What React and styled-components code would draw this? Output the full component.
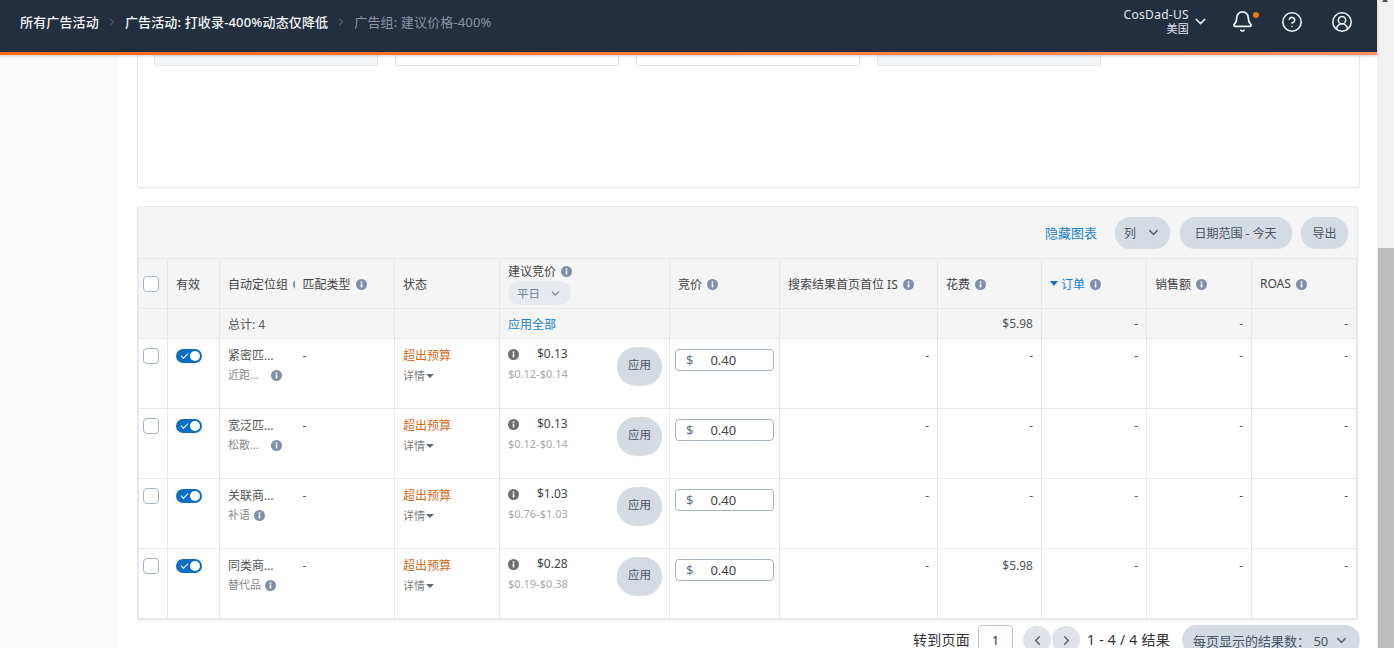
import React from "react";
import styled, { createGlobalStyle } from "styled-components";
import { Bell, ChevronDown, ChevronLeft, ChevronRight, CircleHelp, CircleUserRound } from "lucide-react";

const GlobalStyle = createGlobalStyle`
  html, body { margin: 0; height: 100%; overflow: hidden; background: #fff; }
  body {
    font-family: "Noto Sans", "Noto Sans CJK SC", "Liberation Sans", sans-serif;
    font-size: 12px;
    color: #444;
  }
  * { box-sizing: border-box; }
`;

const rows = [
  { name: "紧密匹…", sub: "近距…", gap: 12, bid: "$0.13", range: "$0.12-$0.14" },
  { name: "宽泛匹…", sub: "松散…", gap: 12, bid: "$0.13", range: "$0.12-$0.14" },
  { name: "关联商…", sub: "补语", gap: 4, bid: "$1.03", range: "$0.76-$1.03" },
  { name: "同类商…", sub: "替代品", gap: 4, bid: "$0.28", range: "$0.19-$0.38", spend: "$5.98" },
];

const colWidths = [29, 52, 75, 100, 105, 170, 110, 158, 104, 105, 105, 105];

const Info = ({ color = "#7f8fa9", size = 11 }) => (
  <InfoSvg viewBox="0 0 12 12" width={size} height={size}>
    <circle cx="6" cy="6" r="6" fill={color} />
    <rect x="5.1" y="5" width="1.8" height="4.2" fill="#fff" />
    <rect x="5.1" y="2.6" width="1.8" height="1.6" fill="#fff" />
  </InfoSvg>
);

const App = () => (
  <Shell>
    <GlobalStyle />
    <Main>
      <TopBar>
        <Crumbs>
          <Crumb>所有广告活动</Crumb>
          <ChevronRight size={12} color="#6f7b8b" />
          <Crumb>广告活动: 打收录-400%动态仅降低</Crumb>
          <ChevronRight size={12} color="#6f7b8b" />
          <Crumb $muted>广告组: 建议价格-400%</Crumb>
        </Crumbs>
        <Account>
          <AccountName>
            <span>CosDad-US</span>
            <small>美国</small>
          </AccountName>
          <ChevronDown size={17} color="#e6e8eb" />
        </Account>
        <BellWrap>
          <Bell size={23} color="#f2f3f5" strokeWidth={1.8} />
          <Dot />
        </BellWrap>
        <CircleHelp size={22} color="#f2f3f5" strokeWidth={1.7} />
        <CircleUserRound size={22} color="#f2f3f5" strokeWidth={1.7} />
      </TopBar>

      <Body>
        <Gutter />
        <Content>
          <ChartCard>
            <Tiles>
              <Tile $tinted />
              <Tile />
              <Tile />
              <Tile $tinted />
            </Tiles>
          </ChartCard>

          <TableCard>
            <Toolbar>
              <ToolbarLink>隐藏图表</ToolbarLink>
              <PillGroup>
                <Pill $w={55}>列 <ChevronDown size={15} strokeWidth={2.4} color="#5b6677" /></Pill>
                <Pill $w={112}>日期范围 - 今天</Pill>
                <Pill $w={47}>导出</Pill>
              </PillGroup>
            </Toolbar>

            <Table>
              <colgroup>
                {colWidths.map((w, i) => <col key={i} style={{ width: w }} />)}
              </colgroup>
              <thead>
                <tr>
                  <HeadCell><Check /></HeadCell>
                  <HeadCell>有效</HeadCell>
                  <HeadCell $noRight $clip><Label>自动定位组<Info /></Label></HeadCell>
                  <HeadCell $noLeft><Label>匹配类型<Info /></Label></HeadCell>
                  <HeadCell>状态</HeadCell>
                  <HeadCell>
                    <Label>建议竞价<Info /></Label>
                    <DayPill>平日 <ChevronDown size={13} strokeWidth={2.2} color="#76849a" /></DayPill>
                  </HeadCell>
                  <HeadCell><Label>竞价<Info /></Label></HeadCell>
                  <HeadCell><Label>搜索结果首页首位 IS<Info /></Label></HeadCell>
                  <HeadCell><Label>花费<Info /></Label></HeadCell>
                  <HeadCell><Label><SortArrow /><SortText>订单</SortText><Info /></Label></HeadCell>
                  <HeadCell><Label>销售额<Info /></Label></HeadCell>
                  <HeadCell><Label>ROAS<Info /></Label></HeadCell>
                </tr>
                <tr>
                  <TotalCell />
                  <TotalCell />
                  <TotalCell $noRight>总计: 4</TotalCell>
                  <TotalCell $noLeft />
                  <TotalCell />
                  <TotalCell><LinkText>应用全部</LinkText></TotalCell>
                  <TotalCell />
                  <TotalCell />
                  <TotalCell $right>$5.98</TotalCell>
                  <TotalCell $right>-</TotalCell>
                  <TotalCell $right>-</TotalCell>
                  <TotalCell $right>-</TotalCell>
                </tr>
              </thead>
              <tbody>
                {rows.map((row) => (
                  <tr key={row.name}>
                    <Cell><Check /></Cell>
                    <Cell><Toggle /></Cell>
                    <Cell $noRight>
                      <div>{row.name}</div>
                      <SubLine>{row.sub}<SubInfo $gap={row.gap}><Info /></SubInfo></SubLine>
                    </Cell>
                    <Cell $noLeft>-</Cell>
                    <Cell>
                      <Over>超出预算</Over>
                      <Details>详情<Caret /></Details>
                    </Cell>
                    <Cell>
                      <BidWrap>
                        <div>
                          <BidLine><Info color="#6f6f6f" /><b>{row.bid}</b></BidLine>
                          <Range>{row.range}</Range>
                        </div>
                        <ApplyBtn>应用</ApplyBtn>
                      </BidWrap>
                    </Cell>
                    <Cell $tight>
                      <BidInput><span>$</span><em>0.40</em></BidInput>
                    </Cell>
                    <Cell $right>-</Cell>
                    <Cell $right>{row.spend || "-"}</Cell>
                    <Cell $right>-</Cell>
                    <Cell $right>-</Cell>
                    <Cell $right>-</Cell>
                  </tr>
                ))}
              </tbody>
            </Table>
          </TableCard>

          <Pager>
            <PagerText>转到页面</PagerText>
            <PageInput>1</PageInput>
            <Arrows>
              <ArrowBtn><ChevronLeft size={15} strokeWidth={2.6} color="#5b6677" /></ArrowBtn>
              <ArrowBtn><ChevronRight size={15} strokeWidth={2.6} color="#5b6677" /></ArrowBtn>
            </Arrows>
            <PagerText>1 - 4 / 4 结果</PagerText>
            <PerPage>每页显示的结果数： 50 <ChevronDown size={15} strokeWidth={2.4} color="#5b6677" /></PerPage>
          </Pager>
        </Content>
      </Body>
    </Main>
    <ScrollTrack>
      <ScrollArrow />
      <ScrollThumb />
    </ScrollTrack>
  </Shell>
);

export default App;

const Shell = styled.div`
  display: flex;
  width: 1394px;
  height: 648px;
  overflow: hidden;
`;

const Main = styled.div`
  flex: none;
  width: 1377px;
  display: flex;
  flex-direction: column;
`;

const TopBar = styled.header`
  position: relative;
  z-index: 2;
  flex: none;
  height: 55px;
  display: flex;
  align-items: center;
  padding: 0 24px 9px 20px;
  background: #232f3f;
  border-bottom: 3px solid;
  border-image: linear-gradient(90deg, #ff6a13, #ff8f68) 1;
  box-shadow: 0 1px 3px rgba(0, 0, 0, 0.2);

  & > svg {
    margin-left: 28px;
  }
`;

const Crumbs = styled.nav`
  flex: 1;
  display: flex;
  align-items: center;
  gap: 7px;
`;

const Crumb = styled.span`
  font-size: 13px;
  letter-spacing: 0.15px;
  font-weight: ${(p) => (p.$muted ? 400 : 500)};
  color: ${(p) => (p.$muted ? "#8994a3" : "#f4f5f6")};
`;

const Account = styled.div`
  display: flex;
  align-items: center;
  gap: 3px;
  color: #e3e6ea;
`;

const AccountName = styled.div`
  display: flex;
  flex-direction: column;
  align-items: flex-end;
  font-size: 12px;
  line-height: 15px;
  letter-spacing: 0.3px;

  small {
    font-size: 11px;
    line-height: 14px;
  }
`;

const BellWrap = styled.div`
  position: relative;
  display: flex;
  margin-left: 22px;
  margin-right: -1px;
`;

const Dot = styled.i`
  position: absolute;
  top: 2px;
  right: -5px;
  width: 6px;
  height: 6px;
  border-radius: 50%;
  background: #e8780f;
`;

const Body = styled.div`
  flex: 1;
  display: flex;
  min-height: 0;
`;

const Gutter = styled.aside`
  flex: none;
  width: 118px;
  background: #fafafa;
`;

const Content = styled.main`
  flex: 1;
  min-width: 0;
  padding: 0 17px 0 19px;
`;

const ChartCard = styled.section`
  height: 133px;
  background: #fff;
  border: 1px solid #e9eaec;
  border-top: 0;
  border-radius: 0 0 3px 3px;
  padding-left: 16px;
  box-shadow: 0 1px 2px rgba(0, 0, 0, 0.04);
`;

const Tiles = styled.div`
  display: flex;
  gap: 17px;
`;

const Tile = styled.div`
  width: 224px;
  height: 11px;
  background: ${(p) => (p.$tinted ? "#f4f5f7" : "#fff")};
  border: 1px solid #e3e5e8;
  border-top: 0;
`;

const TableCard = styled.section`
  margin: 18px 2px 0 0;
  padding-right: 1px;
  background: #f5f5f5;
  border: 1px solid #e6e7e9;
  border-radius: 3px;
  box-shadow: 0 1px 2px rgba(0, 0, 0, 0.05);
`;

const Toolbar = styled.div`
  height: 51px;
  display: flex;
  align-items: center;
  justify-content: flex-end;
  padding-right: 8px;
`;

const LinkText = styled.span`
  font-size: 12px;
  color: #1a7fc9;
`;

const ToolbarLink = styled(LinkText)`
  font-size: 13px;
`;

const PillGroup = styled.div`
  display: flex;
  gap: 9.5px;
  margin-left: 18px;
`;

const Pill = styled.div`
  width: ${(p) => p.$w}px;
  height: 31px;
  display: flex;
  align-items: center;
  justify-content: center;
  gap: 10px;
  border-radius: 16px;
  background: #d5dbe3;
  box-shadow: 0 1px 1px rgba(0, 0, 0, 0.12);
  font-size: 12px;
  color: #4a5564;
`;

const Table = styled.table`
  table-layout: fixed;
  width: 1218px;
  border-collapse: collapse;
`;

const cellBorders = (p) => `
  border: 1px solid #e7e8ea;
  ${p.$noRight ? "border-right: 0;" : ""}
  ${p.$noLeft ? "border-left: 0;" : ""}
`;

const HeadCell = styled.th`
  ${cellBorders}
  height: 50px;
  padding: 0 8px;
  text-align: left;
  font-weight: 400;
  font-size: 12px;
  color: #444;
  white-space: nowrap;
  overflow: hidden;
  ${(p) => (p.$clip ? "padding-right: 0;" : "")}
  &:first-child { padding: 0 0 0 4px; }
`;

const Label = styled.div`
  display: flex;
  align-items: center;
  gap: 5px;
`;

const InfoSvg = styled.svg`
  flex: none;
  display: block;
  margin-top: 1px;
`;

const SortArrow = styled.i`
  width: 0;
  height: 0;
  margin-right: -2px;
  border-left: 4px solid transparent;
  border-right: 4px solid transparent;
  border-top: 5px solid #1a6fb5;
`;

const SortText = styled.span`
  color: #1a7fc9;
`;

const DayPill = styled.div`
  width: 63px;
  height: 24px;
  margin-top: 1px;
  display: flex;
  align-items: center;
  justify-content: center;
  gap: 9px;
  border-radius: 12px;
  background: #e7eaef;
  font-size: 11.5px;
  color: #76849a;
`;

const TotalCell = styled.td`
  ${cellBorders}
  height: 30px;
  padding: 0 8px;
  font-size: 12px;
  color: #555;
  text-align: ${(p) => (p.$right ? "right" : "left")};
`;

const Cell = styled.td`
  ${cellBorders}
  height: 70px;
  padding: ${(p) => (p.$tight ? "10px 5px 0" : "8px 8px 0")};
  vertical-align: top;
  background: #fff;
  font-size: 12px;
  line-height: 18px;
  color: #555;
  text-align: ${(p) => (p.$right ? "right" : "left")};
  &:first-child { padding-left: 4px; padding-top: 9px; }
`;

const Check = styled.div`
  width: 16px;
  height: 16px;
  background: #fff;
  border: 1px solid #a6b2c6;
  border-radius: 4px;
`;

const Toggle = styled.div`
  position: relative;
  width: 26px;
  height: 14px;
  margin-top: 2px;
  border-radius: 7px;
  background: #0a6fc2;

  &::before {
    content: "";
    position: absolute;
    left: 5px;
    top: 4px;
    width: 6px;
    height: 3px;
    border-left: 1.5px solid #fff;
    border-bottom: 1.5px solid #fff;
    transform: rotate(-45deg);
  }

  &::after {
    content: "";
    position: absolute;
    right: 2px;
    top: 2px;
    width: 10px;
    height: 10px;
    border-radius: 50%;
    background: #fff;
  }
`;

const SubLine = styled.div`
  display: flex;
  align-items: center;
  margin-top: 1px;
  font-size: 11px;
  color: #8a8a8a;
`;

const SubInfo = styled.span`
  margin-left: ${(p) => p.$gap}px;
`;

const Over = styled.div`
  color: #d9691a;
`;

const Details = styled.div`
  display: flex;
  align-items: center;
  gap: 1px;
  margin-top: 2px;
  font-size: 11px;
  color: #7d7d7d;
`;

const Caret = styled.i`
  width: 0;
  height: 0;
  border-left: 4px solid transparent;
  border-right: 4px solid transparent;
  border-top: 4px solid #666;
`;

const BidWrap = styled.div`
  display: flex;
  justify-content: space-between;
  margin-right: -1px;
`;

const BidLine = styled.div`
  display: flex;
  align-items: center;
  gap: 18px;
  margin-top: -2px;

  b {
    font-weight: 400;
    color: #444;
  }
`;

const Range = styled.div`
  margin-top: 2px;
  font-size: 11px;
  color: #a8a8a8;
`;

const ApplyBtn = styled.div`
  width: 45px;
  height: 38px;
  display: flex;
  align-items: center;
  justify-content: center;
  padding-bottom: 2px;
  border-radius: 19px;
  background: #d5dbe3;
  box-shadow: 0 1px 1px rgba(0, 0, 0, 0.14);
  font-size: 11.5px;
  color: #4a5564;
`;

const BidInput = styled.div`
  width: 99px;
  height: 22px;
  display: flex;
  align-items: center;
  padding-left: 10px;
  border: 1px solid #a6b2c6;
  border-radius: 4px;
  font-size: 13px;
  color: #444;

  span {
    color: #66758c;
  }

  em {
    margin-left: 17px;
    font-style: normal;
  }
`;

const Pager = styled.div`
  display: flex;
  justify-content: flex-end;
  align-items: center;
  height: 30px;
  margin-top: 5px;
  font-size: 14px;
  color: #333;
`;

const PagerText = styled.span`
  line-height: 16px;
  letter-spacing: 0.25px;
`;

const PageInput = styled.div`
  flex: none;
  align-self: flex-start;
  width: 35px;
  height: 36px;
  margin: 0 10px 0 8px;
  display: flex;
  align-items: center;
  justify-content: center;
  padding-bottom: 6px;
  border: 1px solid #bcc5d3;
  border-radius: 4px;
  font-size: 13px;
`;

const Arrows = styled.div`
  display: flex;
  gap: 1px;
  margin-right: 7px;
`;

const ArrowBtn = styled.div`
  width: 28px;
  height: 28px;
  display: flex;
  align-items: center;
  justify-content: center;
  border-radius: 50%;
  background: #dfe3e9;
`;

const PerPage = styled.div`
  flex: none;
  width: 178px;
  height: 30px;
  margin-left: 12px;
  padding-left: 11px;
  display: flex;
  align-items: center;
  gap: 6px;
  border-radius: 15px;
  background: #d5dbe3;
  font-size: 13px;
  white-space: nowrap;
  color: #4a5564;
`;

const ScrollTrack = styled.div`
  position: relative;
  flex: 1;
  background: #f1f1f1;
  padding-top: 248px;
`;

const ScrollArrow = styled.i`
  position: absolute;
  top: -2px;
  left: 5px;
  width: 0;
  height: 0;
  border-left: 3.5px solid transparent;
  border-right: 3.5px solid transparent;
  border-bottom: 4px solid #505050;
`;

const ScrollThumb = styled.div`
  height: 400px;
  margin-left: 1px;
  background: #bdbdbd;
`;
